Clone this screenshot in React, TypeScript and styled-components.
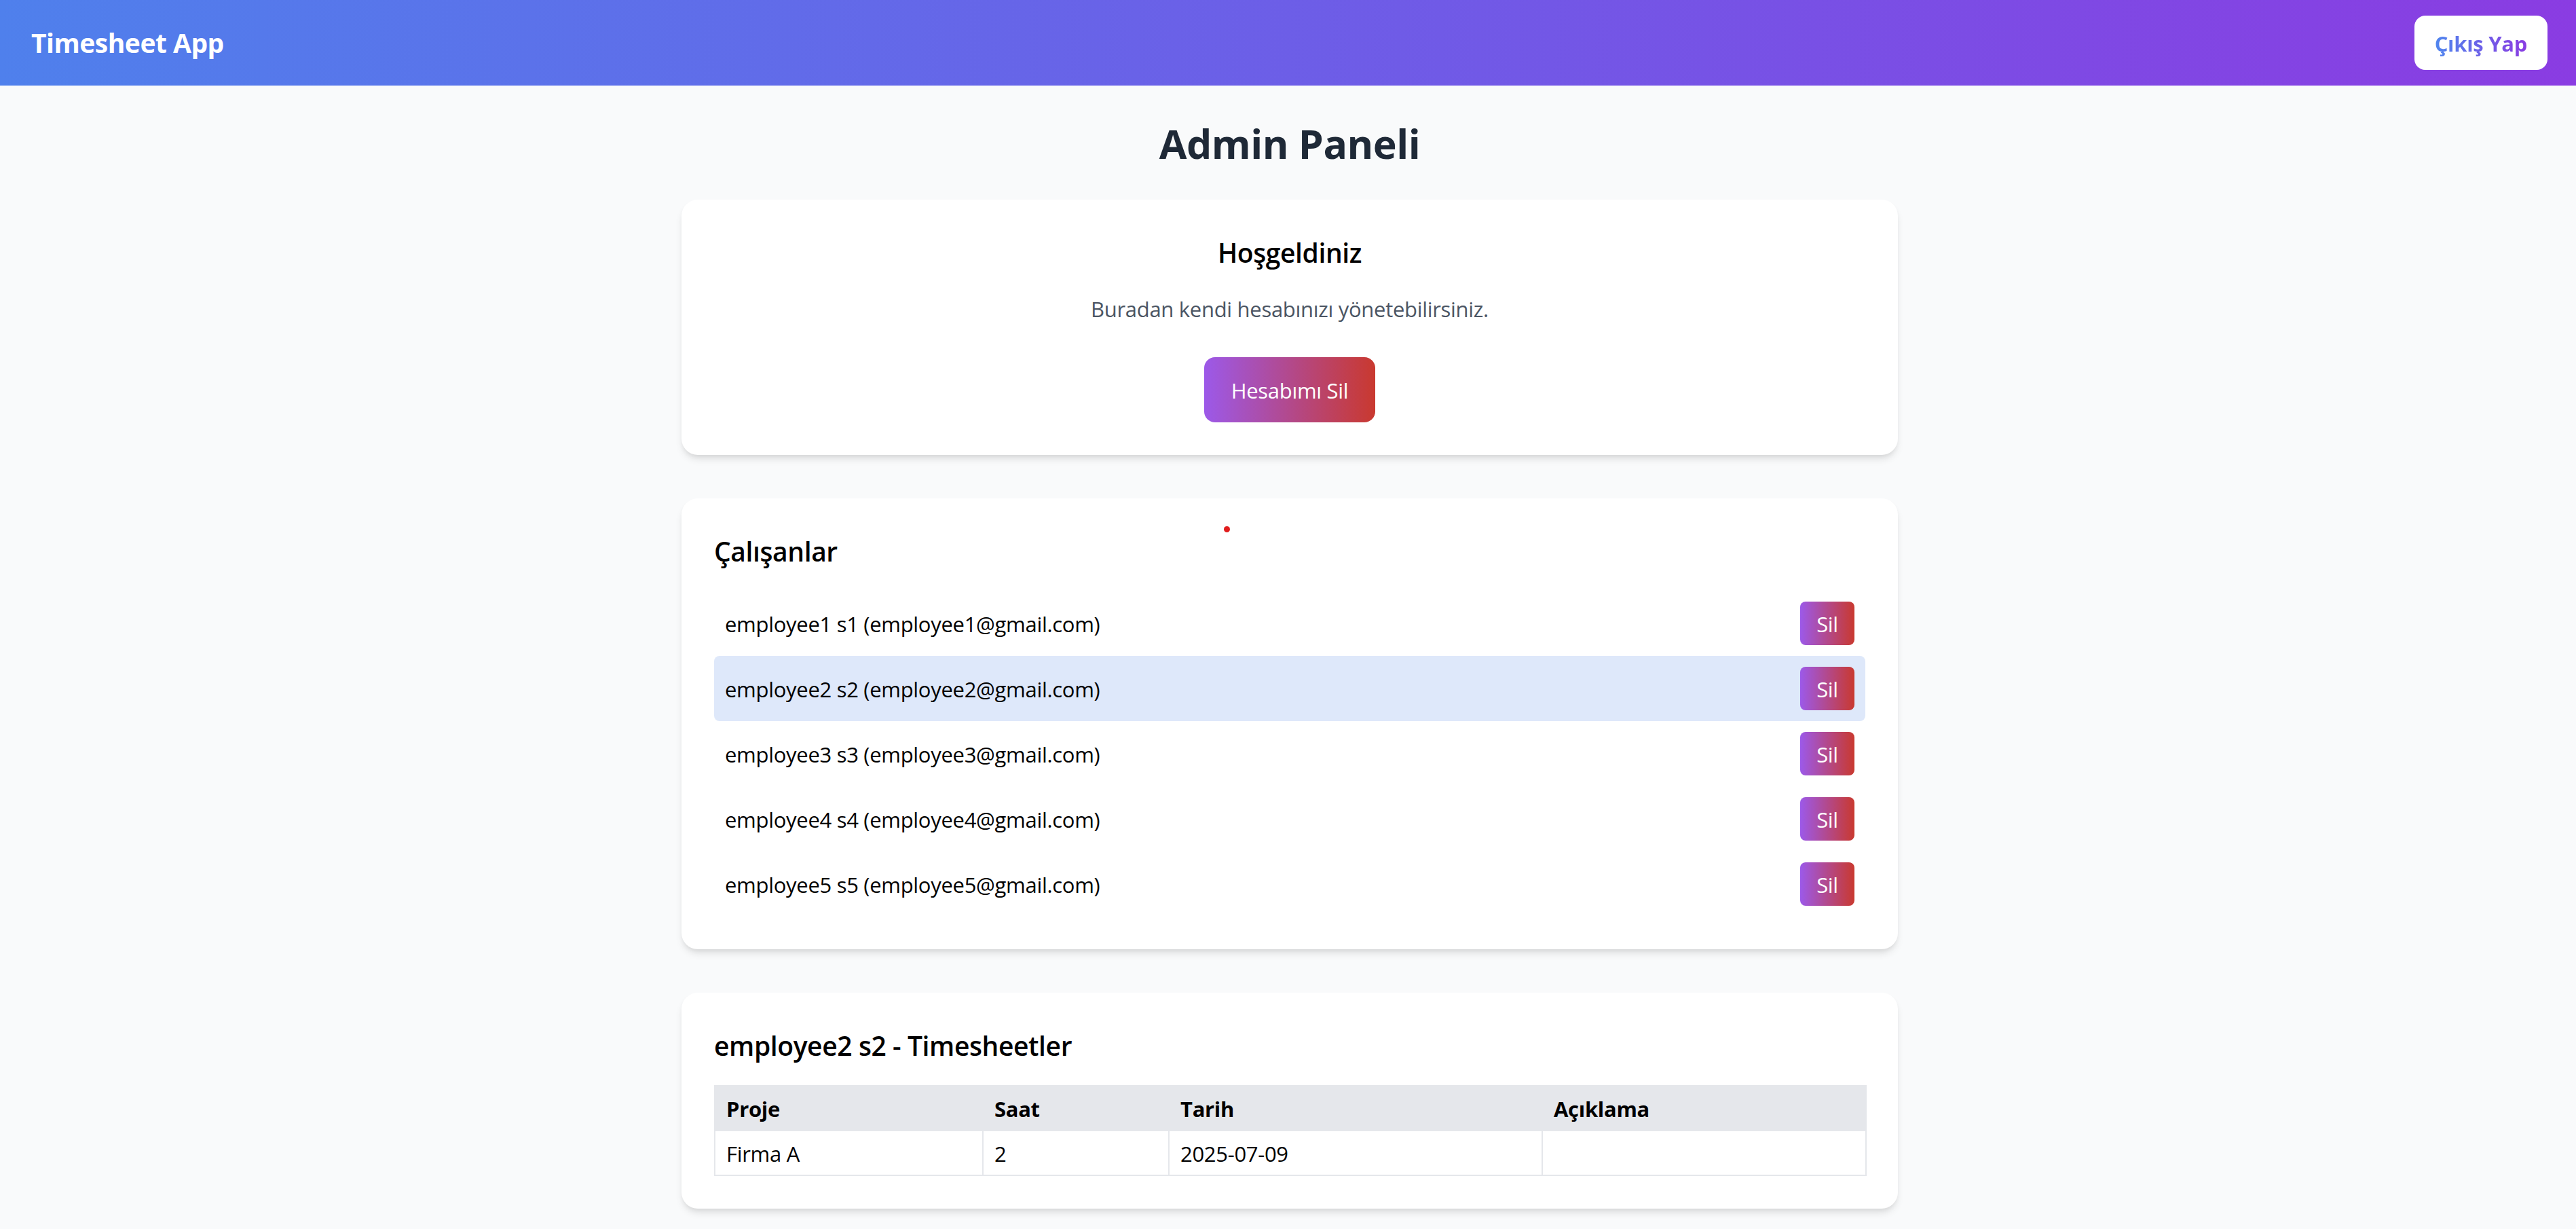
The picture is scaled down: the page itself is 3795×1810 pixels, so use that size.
import React from "react";
import styled, { createGlobalStyle } from "styled-components";

const GlobalStyle = createGlobalStyle`
  html, body {
    margin: 0;
    padding: 0;
    background: #f9fafb;
    font-family: "Open Sans", "Noto Sans", "Liberation Sans", sans-serif;
    color: #000;
  }
  * { box-sizing: border-box; }
`;

const Page = styled.div`
  min-height: 1810px;
  background: #f9fafb;
`;

const TopBar = styled.header`
  height: 126px;
  display: flex;
  align-items: center;
  justify-content: space-between;
  padding: 0 42px 0 46px;
  background: linear-gradient(to right, #4f80ec, #8a3ce2);
`;

const Brand = styled.div`
  color: #fff;
  font-size: 39px;
  font-weight: 700;
  line-height: 56px;
  letter-spacing: -0.5px;
`;

const LogoutButton = styled.button`
  background: #fff;
  border: none;
  border-radius: 16px;
  padding: 17px 30px 15px;
  font-family: inherit;
  font-size: 31px;
  font-weight: 700;
  line-height: 48px;
  letter-spacing: -0.3px;
  cursor: pointer;
`;

const GradientText = styled.span`
  background: linear-gradient(to right, #4f86ee, #8a3ce2);
  -webkit-background-clip: text;
  background-clip: text;
  color: transparent;
`;

const Main = styled.main`
  padding: 49px 0 0 5px;
`;

const Container = styled.div`
  width: 1792px;
  margin: 0 auto;
`;

const PageTitle = styled.h1`
  margin: 0 0 47px;
  text-align: center;
  font-size: 59px;
  font-weight: 700;
  line-height: 72px;
  color: #1f2937;
  letter-spacing: -0.5px;
`;

const Card = styled.section<{ $center?: boolean }>`
  position: relative;
  background: #fff;
  border-radius: 24px;
  padding: 48px;
  margin-bottom: 64px;
  box-shadow: 0 8px 12px -2px rgba(0, 0, 0, 0.1), 0 4px 8px -4px rgba(0, 0, 0, 0.1);
  text-align: ${(p) => (p.$center ? "center" : "left")};
`;

const CardTitle = styled.h2`
  margin: 0 0 32px;
  padding-top: 2px;
  height: 56px;
  font-size: 39px;
  font-weight: 600;
  line-height: 56px;
  color: #000;
  letter-spacing: -0.4px;
`;

const Lead = styled.p`
  margin: 0 0 48px;
  padding-top: 1px;
  height: 48px;
  font-size: 31px;
  line-height: 48px;
  color: #4b5563;
  letter-spacing: -0.3px;
`;

const DangerButton = styled.button<{ $small?: boolean }>`
  border: none;
  color: #fff;
  font-family: inherit;
  font-size: 31px;
  line-height: 48px;
  letter-spacing: -0.3px;
  background: linear-gradient(to right, #9c59e9, #c9392f);
  cursor: pointer;
  border-radius: ${(p) => (p.$small ? "8px" : "16px")};
  padding: ${(p) => (p.$small ? "9px 0 7px" : "25px 40px 23px")};
  width: ${(p) => (p.$small ? "80px" : "auto")};
`;

const Dot = styled.span`
  position: absolute;
  left: 799px;
  top: 41px;
  width: 9px;
  height: 9px;
  border-radius: 50%;
  background: #e11d1d;
`;

const List = styled.div`
  display: flex;
  flex-direction: column;
`;

const Row = styled.div<{ $active?: boolean }>`
  display: flex;
  align-items: center;
  justify-content: space-between;
  padding: 16px;
  border-radius: 8px;
  background: ${(p) => (p.$active ? "#dee8fa" : "transparent")};
`;

const RowText = styled.span`
  padding-top: 2px;
  font-size: 31px;
  line-height: 48px;
  color: #000;
  letter-spacing: -0.3px;
`;

const Table = styled.table`
  width: 100%;
  border-collapse: collapse;
  table-layout: fixed;
`;

const Th = styled.th`
  background: #e5e7eb;
  border: 2px solid #e5e7eb;
  padding: 9px 16px 7px;
  text-align: left;
  font-size: 31px;
  font-weight: 700;
  line-height: 48px;
  color: #000;
  letter-spacing: -0.3px;
`;

const Td = styled.td`
  border: 2px solid #e5e7eb;
  padding: 9px 16px 7px;
  font-size: 31px;
  line-height: 48px;
  color: #000;
  letter-spacing: -0.3px;
`;

const employees = [1, 2, 3, 4, 5].map((n) => ({
  id: n,
  label: `employee${n} s${n} (employee${n}@gmail.com)`,
}));

const columns = [
  { name: "Proje", width: 395 },
  { name: "Saat", width: 274 },
  { name: "Tarih", width: 550 },
  { name: "Açıklama", width: 477 },
];

export default function App() {
  return (
    <Page>
      <GlobalStyle />
      <TopBar>
        <Brand>Timesheet App</Brand>
        <LogoutButton>
          <GradientText>Çıkış Yap</GradientText>
        </LogoutButton>
      </TopBar>
      <Main>
        <Container>
          <PageTitle>Admin Paneli</PageTitle>

          <Card $center>
            <CardTitle>Hoşgeldiniz</CardTitle>
            <Lead>Buradan kendi hesabınızı yönetebilirsiniz.</Lead>
            <DangerButton>Hesabımı Sil</DangerButton>
          </Card>

          <Card>
            <Dot />
            <CardTitle>Çalışanlar</CardTitle>
            <List>
              {employees.map((e) => (
                <Row key={e.id} $active={e.id === 2}>
                  <RowText>{e.label}</RowText>
                  <DangerButton $small>Sil</DangerButton>
                </Row>
              ))}
            </List>
          </Card>

          <Card>
            <CardTitle>employee2 s2 - Timesheetler</CardTitle>
            <Table>
              <colgroup>
                {columns.map((c) => (
                  <col key={c.name} style={{ width: `${c.width}px` }} />
                ))}
              </colgroup>
              <thead>
                <tr>
                  {columns.map((c) => (
                    <Th key={c.name}>{c.name}</Th>
                  ))}
                </tr>
              </thead>
              <tbody>
                <tr>
                  <Td>Firma A</Td>
                  <Td>2</Td>
                  <Td>2025-07-09</Td>
                  <Td></Td>
                </tr>
              </tbody>
            </Table>
          </Card>
        </Container>
      </Main>
    </Page>
  );
}
